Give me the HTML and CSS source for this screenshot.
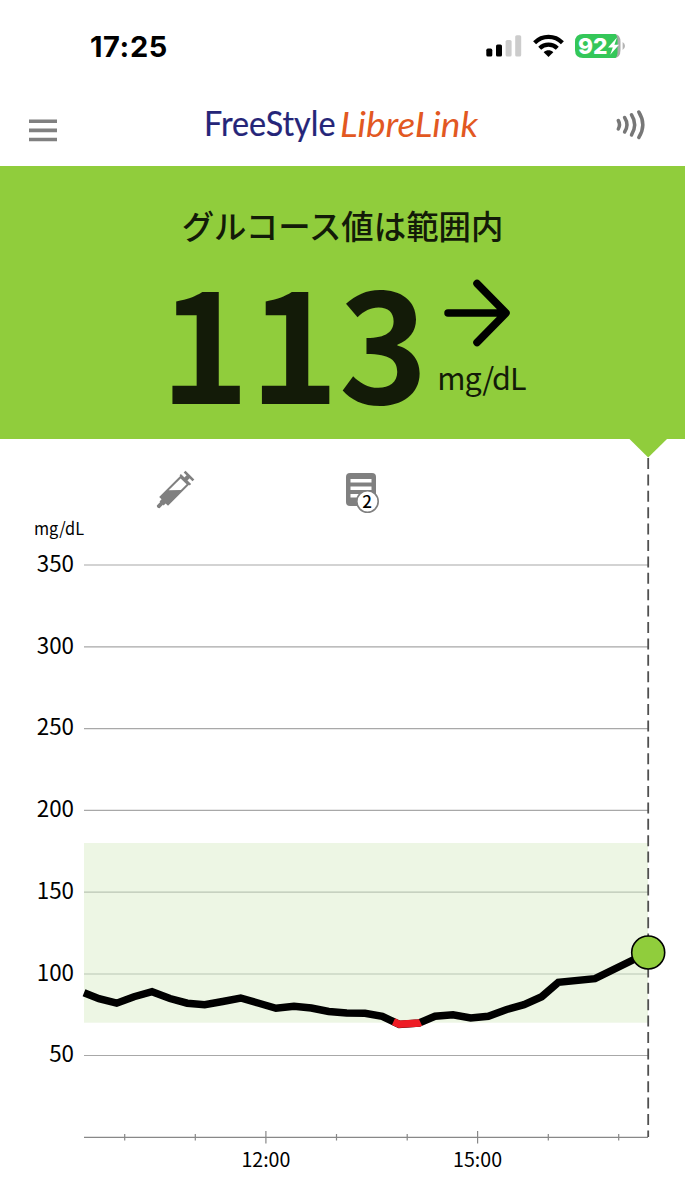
FILE: index.html
```html
<!DOCTYPE html>
<html lang="ja">
<head>
    <meta charset="UTF-8">
    <meta name="viewport" content="width=device-width, initial-scale=1.0">
    <title>FreeStyle LibreLink</title>
    <link rel="stylesheet" href="styles.css">
</head>
<body>

<div class="status-bar">
    <span class="time">17:25</span>
    <div class="status-icons">
        <svg class="signal" width="36" height="22" viewBox="0 0 36 22">
            <rect x="0.3" y="13.6" width="6" height="8" rx="1.6"/>
            <rect x="10" y="9.6" width="6" height="12" rx="1.6"/>
            <rect class="off" x="19.6" y="5" width="6" height="16.6" rx="1.6"/>
            <rect class="off" x="29.2" y="0.2" width="6" height="21.4" rx="1.6"/>
        </svg>
        <svg class="wifi" width="31" height="22" viewBox="0 0 31 22">
            <path d="M1.600 7.800C9.400 0 21.600 0 29.400 7.800" stroke-width="4.200"/>
            <path d="M6.700 13.200C11.700 8.400 19.300 8.400 24.300 13.200" stroke-width="4.200"/>
            <path class="dot" d="M10.700 17.300C13.500 14.700 17.500 14.700 20.300 17.300L15.500 22Z"/>
        </svg>
        <svg class="battery" width="51" height="24" viewBox="0 0 51 24">
            <path d="M38 0H39Q45.500 0 45.500 8V16Q45.500 24 39 24H38Z" fill="#a9a9a9"/>
            <path d="M8 0H40.500Q42.500 2 42.500 5V19Q42.500 22 40.500 24H8Q0 24 0 16V8Q0 0 8 0Z" fill="#34c759"/>
            <path d="M47.600 8Q50 9.500 50 12T47.600 16Z" fill="#b4b4b4"/>
            <text x="3" y="19.800" textLength="29.500" lengthAdjust="spacingAndGlyphs">92</text>
            <path d="M42 3.500L33 13.400H37.800L35.200 20.800L44 10.800H39.400Z" fill="#fff"/>
        </svg>
    </div>
</div>

<div class="header">
    <svg class="menu" width="28" height="24" viewBox="0 0 28 24">
        <path d="M0 2.200H28M0 11.400H28M0 20.500H28"/>
    </svg>
    <svg class="logo" width="280" height="48" viewBox="0 0 280 48">
        <text class="free" x="0" y="34.500" textLength="131.500" lengthAdjust="spacingAndGlyphs">FreeStyle</text>
        <text class="libre" x="136" y="35.700" textLength="138" lengthAdjust="spacingAndGlyphs">LibreLink</text>
    </svg>
    <svg class="scan" width="32" height="32" viewBox="0 0 32 32">
        <path d="M3.300 11.500Q5.700 15.600 3.300 20"/>
        <path d="M9.600 8.500Q14.300 15.700 9.600 23"/>
        <path d="M16.500 5.800Q22.800 15.700 16.500 26"/>
        <path d="M23.800 3Q31.800 15.700 23.800 28.500"/>
    </svg>
</div>

<div class="glucose">
    <div class="message">グルコース値は範囲内</div>
    <div class="reading">
        <span class="value">113</span>
        <div class="trend">
            <svg width="68" height="68" viewBox="0 0 68 68">
                <path d="M4 34H61M33 4.500L62 34L33 63.500"/>
            </svg>
            <span class="unit">mg/dL</span>
        </div>
    </div>
</div>

<svg class="chart" width="685" height="761" viewBox="0 439 685 761">
    <path class="pointer" d="M629.500 439H667L648.200 457.500Z"/>

    <!-- insulin -->
    <g class="syringe" transform="translate(157.500 507.500) rotate(-45) scale(.96)">
        <path d="M1 -2H6V-3H9V-6.500H41V6.500H9V3H6V2H1Q-1 0 1 -2Z"/>
        <path class="empty" d="M21 -4.400H38.500V4.400H30Z"/>
        <path d="M40 -2.200H47V2.200H40Z"/>
        <path d="M40 -7.500H42V7.500H40ZM45 -6.500H47.800V6.500H45Z"/>
    </g>

    <!-- notes -->
    <rect class="note" x="346" y="473" width="30" height="33" rx="4"/>
    <path class="note-lines" d="M350.500 480.700H371.500M350.500 488.200H371.500M350.500 495.700H371.500"/>
    <circle class="badge" cx="367.500" cy="501.500" r="10.700"/>
    <text class="badge-text" x="367.200" y="508">2</text>

    <rect class="target" x="84" y="843" width="564" height="179.700"/>
    <path class="grid" d="M84 565H648M84 646.800H648M84 728.600H648M84 810.400H648M84 1055.500H648"/>
    <path class="grid in-target" d="M84 892.200H648M84 974H648"/>
    <path class="axis" d="M84 1137.300H648M124.700 1134V1140.500M195.300 1134V1140.500M265.900 1131V1143.500M336.500 1134V1140.500M407.200 1134V1140.500M477.600 1131V1143.500M548.300 1134V1140.500M618.700 1134V1140.500"/>

    <text class="unit-label" x="34" y="535" textLength="50" lengthAdjust="spacingAndGlyphs">mg/dL</text>
    <g class="y-labels">
        <text x="74" y="572">350</text>
        <text x="74" y="653.500">300</text>
        <text x="74" y="735">250</text>
        <text x="74" y="817">200</text>
        <text x="74" y="898.500">150</text>
        <text x="74" y="980.500">100</text>
        <text x="74" y="1062">50</text>
    </g>
    <g class="x-labels">
        <text x="265.900" y="1167">12:00</text>
        <text x="477.600" y="1167">15:00</text>
    </g>

    <path class="now" d="M648.200 458V1137"/>
    <polyline class="line" points="84,992.700 99,998.700 116.700,1003.200 134,996.700 152,991.700 170,998.500 187.300,1003.200 204.700,1004.700 222.700,1001.500 240.700,998 258,1003 276,1008.300 294,1006.300 311.300,1008 328.700,1011.500 346.700,1013 365,1013.200 382.300,1016.300 399.300,1024.500 419,1023 435,1016.300 453,1014.700 470.700,1018 488.300,1016.300 506.700,1009.500 524,1004.700 541.700,996.700 558.300,982.300 595,978.700 648.200,952.500"/>
    <polyline class="line low" points="393.500,1021.700 399.300,1024.300 419,1023 420.500,1022.300"/>
    <circle class="current" cx="648.200" cy="952.500" r="16.500"/>
</svg>

</body>
</html>
```

FILE: styles.css
```css
body { margin: 0; width: 685px; background: #fff; font-family: "Noto Sans CJK JP", "Noto Sans", sans-serif; color: #000; }
svg { display: block; overflow: visible; }

.status-bar { display: flex; justify-content: space-between; align-items: center; height: 92px; padding: 0 59px 0 90px; box-sizing: border-box; }
.time { padding-top: 2px; font-family: Inter, sans-serif; font-size: 29px; font-weight: 700; line-height: 34px; letter-spacing: .6px; }
.status-icons { display: flex; align-items: center; gap: 11px; }
.wifi path { fill: none; stroke: #000; }
.wifi .dot { fill: #000; stroke: none; }
.signal .off { fill: #ccc; }
.battery text { font-family: Inter, sans-serif; font-size: 22px; font-weight: 800; fill: #fff; }

.header { display: flex; justify-content: space-between; align-items: center; height: 74px; padding: 0 38px 0 29px; box-sizing: border-box; }
.menu { margin-top: 4px; }
.menu path { stroke: #808080; stroke-width: 3.6; }
.logo { margin: -9px 0 0 16px; }
.logo text { font-family: Lato, sans-serif; font-size: 35px; }
.logo .free { fill: #252578; stroke: #252578; stroke-width: .2; }
.logo .libre { font-style: italic; font-weight: 400; fill: #e25822; }
.scan { margin-top: -8px; }
.scan path { fill: none; stroke: #777; stroke-width: 3.5; stroke-linecap: round; }

.glucose { height: 273px; padding-top: 36px; box-sizing: border-box; background: #90cd3c; color: #131b08; }
.message { font-size: 32.4px; font-weight: 500; line-height: 46px; text-align: center; }
.reading { display: flex; padding: 10px 0 0 160px; }
.value { font-size: 151.5px; font-weight: 700; line-height: 160px; }
.trend { display: flex; flex-direction: column; padding: 21px 0 0 16px; }
.trend path { fill: none; stroke: #000; stroke-width: 7.5; stroke-linecap: round; stroke-linejoin: round; }
.unit { margin: 8px 0 0 -7px; font-size: 30.5px; line-height: 44px; letter-spacing: -1px; }

.pointer { fill: #90cd3c; }
.syringe { fill: #808080; }
.syringe .empty { fill: #fff; }
.note { fill: #808080; }
.note-lines { stroke: #fff; stroke-width: 3.4; }
.badge { fill: #fff; stroke: #808080; stroke-width: 1.6; }
.badge-text { font-size: 17px; font-weight: 500; text-anchor: middle; }
.target { fill: #edf6e4; }
.grid { stroke: #a8a8a8; stroke-width: 1.2; }
.in-target { stroke: #bac5b4; }
.axis { stroke: #888; stroke-width: 1.2; fill: none; }
.unit-label { font-size: 17.5px; }
.y-labels { font-size: 22.4px; text-anchor: end; }
.x-labels { font-size: 19.6px; text-anchor: middle; }
.now { stroke: #505050; stroke-width: 1.8; stroke-dasharray: 11 5.4; }
.line { fill: none; stroke: #000; stroke-width: 7.5; }
.low { stroke: #ee1c25; }
.current { fill: #90cd3c; stroke: #000; stroke-width: 1.6; }
```
